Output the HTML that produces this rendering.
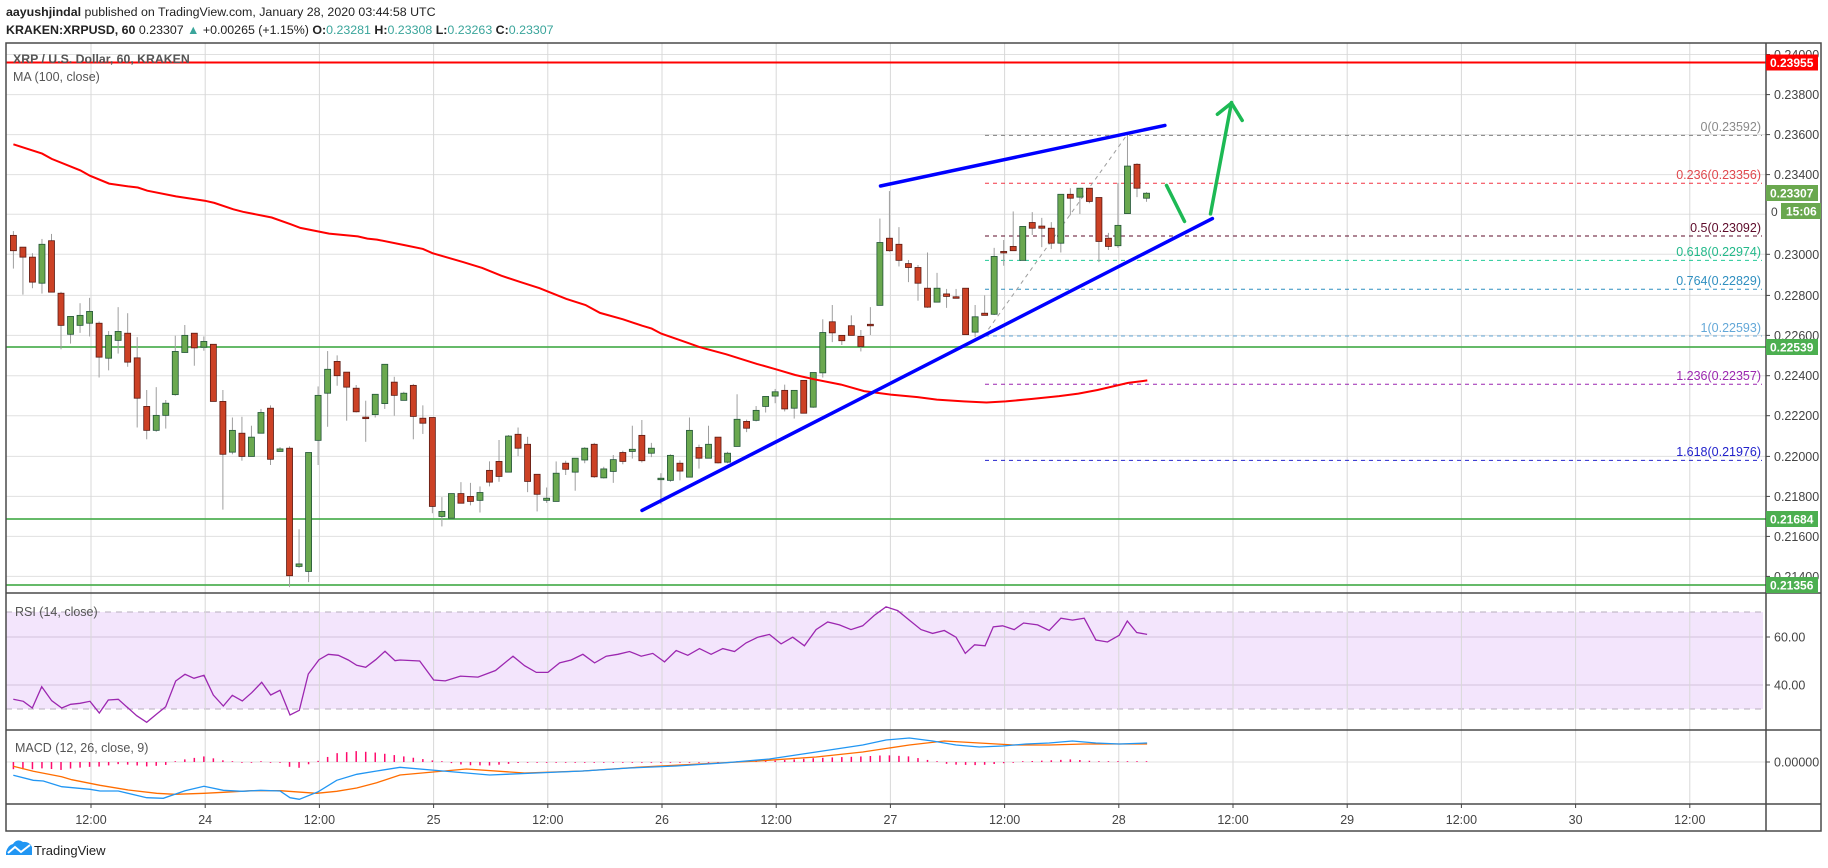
<!DOCTYPE html>
<html><head><meta charset="utf-8">
<style>
html,body{margin:0;padding:0;background:#fff;}
body{width:1828px;height:868px;overflow:hidden;position:relative;font-family:"Liberation Sans",sans-serif;}
svg{position:absolute;left:0;top:0;}
text{font-family:"Liberation Sans",sans-serif;}
</style></head><body>
<svg id="s" width="1828" height="868" viewBox="0 0 1828 868" xmlns="http://www.w3.org/2000/svg">
<g id="grid"></g>
<rect x="6" y="612" width="1757" height="97" fill="#f3e5fc"/>
<line x1="6" y1="612" x2="1763" y2="612" stroke="#b7aebc" stroke-dasharray="6,5"/>
<line x1="6" y1="709" x2="1763" y2="709" stroke="#b7aebc" stroke-dasharray="6,5"/>
<line x1="6" y1="637" x2="1763" y2="637" stroke="#d3c2dd"/>
<line x1="6" y1="685" x2="1763" y2="685" stroke="#d3c2dd"/>
<g id="vgrid"></g>
<line x1="6" y1="762" x2="1766" y2="762" stroke="#e0e0e0"/>
<line x1="6" y1="62.5" x2="1766" y2="62.5" stroke="#f00" stroke-width="2"/>
<line x1="6" y1="347" x2="1766" y2="347" stroke="#4caf50" stroke-width="2" opacity=".85"/>
<line x1="6" y1="519" x2="1766" y2="519" stroke="#4caf50" stroke-width="2" opacity=".85"/>
<line x1="6" y1="585" x2="1766" y2="585" stroke="#4caf50" stroke-width="2" opacity=".85"/>
<g stroke-dasharray="4,4" stroke-width="1">
<line x1="985" y1="135.4" x2="1762" y2="135.4" stroke="#808080"/>
<line x1="985" y1="183.2" x2="1762" y2="183.2" stroke="#f23645"/>
<line x1="985" y1="236" x2="1762" y2="236" stroke="#5d0b2a"/>
<line x1="985" y1="260.4" x2="1762" y2="260.4" stroke="#22c997"/>
<line x1="985" y1="289.3" x2="1762" y2="289.3" stroke="#2f8fc0"/>
<line x1="985" y1="336" x2="1762" y2="336" stroke="#64a8d8"/>
<line x1="985" y1="384.3" x2="1762" y2="384.3" stroke="#9c27b0"/>
<line x1="985" y1="460.4" x2="1762" y2="460.4" stroke="#2222cc"/>
<line x1="988.4" y1="329.3" x2="1127.4" y2="134.3" stroke="#9e9e9e"/>
</g>
<g font-size="12.5" text-anchor="end">
<text x="1761" y="131" fill="#8a8a8a">0(0.23592)</text>
<text x="1761" y="179" fill="#e0474c">0.236(0.23356)</text>
<text x="1761" y="232" fill="#5d0b2a">0.5(0.23092)</text>
<text x="1761" y="256" fill="#22b98a">0.618(0.22974)</text>
<text x="1761" y="285" fill="#2f8fc0">0.764(0.22829)</text>
<text x="1761" y="332" fill="#64a8d8">1(0.22593)</text>
<text x="1761" y="380" fill="#9c27b0">1.236(0.22357)</text>
<text x="1761" y="456" fill="#2222cc">1.618(0.21976)</text>
</g>
<g id="candles"></g>
<polyline id="ma" fill="none" stroke="#f00" stroke-width="2"/>
<line x1="642" y1="510.4" x2="1212.4" y2="218.6" stroke="#0000ff" stroke-width="3.5" stroke-linecap="round"/>
<line x1="880.5" y1="186" x2="1164.9" y2="125.4" stroke="#0000ff" stroke-width="3.5" stroke-linecap="round"/>
<line x1="1166.5" y1="185.4" x2="1184.5" y2="221.4" stroke="#1db954" stroke-width="3.5" stroke-linecap="round"/>
<polyline points="1210.5,213.9 1231.5,102.5" fill="none" stroke="#1db954" stroke-width="3.5" stroke-linecap="round"/>
<polyline points="1217.4,114.3 1231.5,103 1242.2,120.4" fill="none" stroke="#1db954" stroke-width="3.5" stroke-linecap="round" stroke-linejoin="round"/>
<polyline id="rsi" fill="none" stroke="#9c27b0" stroke-width="1.3"/>
<g id="hist" stroke="#ff0a6c" stroke-width="1.5"></g>
<polyline id="sig" fill="none" stroke="#ff6d00" stroke-width="1.3"/>
<polyline id="macd" fill="none" stroke="#2196f3" stroke-width="1.3"/>
<g stroke="#4a4a4a" stroke-width="1.5" fill="none">
<rect x="6" y="43" width="1815" height="788"/>
<line x1="1766" y1="43" x2="1766" y2="831"/>
<line x1="6" y1="593" x2="1821" y2="593"/>
<line x1="6" y1="730" x2="1821" y2="730"/>
<line x1="6" y1="804" x2="1821" y2="804"/>
</g>
<g id="axis" font-size="12.5" fill="#444"></g>
<g id="time" font-size="12.5" fill="#444" text-anchor="middle"></g>
<g font-size="12" font-weight="bold" fill="#fff">
<rect x="1766" y="54.5" width="52" height="16" fill="#f00"/>
<text x="1770" y="67">0.23955</text>
<rect x="1766" y="185" width="52" height="16" fill="#6aa84f"/>
<text x="1770" y="197.5">0.23307</text>
<text x="1771" y="216" font-weight="normal" fill="#444">0</text>
<rect x="1781" y="203" width="40" height="16" fill="#6aa84f"/>
<text x="1786" y="215.5">15:06</text>
<rect x="1766" y="339" width="52" height="16" fill="#4caf50"/>
<text x="1770" y="351.5">0.22539</text>
<rect x="1766" y="511" width="52" height="16" fill="#4caf50"/>
<text x="1770" y="523.5">0.21684</text>
<rect x="1766" y="577" width="52" height="16" fill="#4caf50"/>
<text x="1770" y="589.5">0.21356</text>
</g>
<text x="13" y="63" font-size="12.3" font-weight="bold" fill="#555">XRP / U.S. Dollar, 60, KRAKEN</text>
<text x="13" y="81" font-size="12.5" fill="#555">MA (100, close)</text>
<text x="15" y="616" font-size="12.5" fill="#555">RSI (14, close)</text>
<text x="15" y="752" font-size="12.5" fill="#555">MACD (12, 26, close, 9)</text>
<text x="6" y="16" font-size="12.4" fill="#222"><tspan font-weight="bold">aayushjindal</tspan> published on TradingView.com, January 28, 2020 03:44:58 UTC</text>
<text x="6" y="34" font-size="12.4" fill="#222"><tspan font-weight="bold">KRAKEN:XRPUSD, 60</tspan> 0.23307 <tspan fill="#3aa59b">▲</tspan> +0.00265 (+1.15%) <tspan font-weight="bold">O:</tspan><tspan fill="#3aa59b">0.23281</tspan> <tspan font-weight="bold">H:</tspan><tspan fill="#3aa59b">0.23308</tspan> <tspan font-weight="bold">L:</tspan><tspan fill="#3aa59b">0.23263</tspan> <tspan font-weight="bold">C:</tspan><tspan fill="#3aa59b">0.23307</tspan></text>
<path d="M6,855 L6,852 Q8,845 13,844 Q17,838 23,842 Q29,841 32,847 L32,855 Z" fill="#2196f3"/>
<polyline points="8,853 15,847 21,852 30,845" fill="none" stroke="#fff" stroke-width="2"/>
<text x="34" y="855" font-size="13" fill="#222">TradingView</text>
</svg>
<script>
var NS="http://www.w3.org/2000/svg";
function el(p,t,a){var e=document.createElementNS(NS,t);for(var k in a)e.setAttribute(k,a[k]);document.getElementById(p).appendChild(e);return e;}
var hy=[54.5,94.6,134.6,174.6,214.3,254.3,295.4,335.4,375.7,415.7,456.4,496.4,536.4,576.4];
hy.forEach(function(y){el("grid","line",{x1:6,y1:y,x2:1766,y2:y,stroke:"#e0e0e0"});});
var tl=["12:00","24","12:00","25","12:00","26","12:00","27","12:00","28","12:00","29","12:00","30","12:00"];
for(var i=0;i<15;i++){var x=91+i*114.2;
 el("vgrid","line",{x1:x,y1:43,x2:x,y2:804,stroke:"#d8d8d8"});
 el("time","line",{x1:x,y1:804,x2:x,y2:808,stroke:"#444"});
 var t=el("time","text",{x:x,y:824});t.textContent=tl[i];}
var ax=[["0.24000",54.5],["0.23800",94.6],["0.23600",134.6],["0.23400",174.6],["0.23000",254.3],["0.22800",295.4],["0.22600",335.4],["0.22400",375.7],["0.22200",415.7],["0.22000",456.4],["0.21800",496.4],["0.21600",536.4],["0.21400",576.4],["60.00",637],["40.00",685],["0.00000",762]];
ax.forEach(function(a){el("axis","line",{x1:1766,y1:a[1],x2:1770,y2:a[1],stroke:"#444"});var t=el("axis","text",{x:1774,y:a[1]+4.5});t.textContent=a[0];});
var D="r547,590,535,640;r580,608,580,713;r608,678,597,695;g572,681,557,710;r562,706,543,706;r709,799,705,866;g774,824,774,850;g771,799,737,820;g760,793,722,830;r793,888,788,945;g827,891,815,925;g816,841,748,878;r821,902,765,915;r890,1003,832,1085;r1026,1093,980,1118;g1051,1093,972,1097;g1017,1051,1008,1088;g872,993,828,996;g827,875,798,876;r821,862,821,912;g844,860,830,870;r852,1012,852,1012;r1012,1160,980,1315;g1093,1154,1057,1160;r1101,1166,1055,1178;g1112,1166,1080,1166;g1043,1101,1033,1101;r1031,1174,1023,1190;g1145,1152,1140,1152;r1143,1500,1138,1532;g1467,1474,1370,1478;g1155,1488,1155,1518;g995,1121,970,1190;g922,989,871,1083;r900,940,883,968;r930,972,930,1066;r975,1041,966,1043;r1056,1059,1010,1125;g992,1049,992,1057;g908,1018,908,1033;r958,995,943,1052;g989,1009,985,1009;r967,1054,963,1118;r1059,1073,1023,1103;r1057,1306,1057,1325;g1320,1334,1280,1362;g1270,1339,1270,1339;r1270,1297,1238,1297;r1278,1292,1240,1303;g1267,1289,1250,1323;r1205,1238,1180,1250;r1180,1222,1120,1237;g1109,1210,1106,1210;r1104,1143,1085,1165;r1132,1236,1111,1266;r1216,1272,1216,1320;g1283,1289,1253,1296;g1213,1292,1180,1292;r1185,1202,1178,1218;g1171,1210,1171,1262;g1143,1176,1140,1185;r1132,1223,1128,1226;"+
"g1201,1226,1195,1228;g1175,1208,1162,1240;r1155,1180,1150,1188;g1146,1152,1080,1172;r1107,1178,1064,1183;g1143,1157,1128,1168;g1227,1230,1213,1300;g1163,1233,1160,1237;r1185,1207,1177,1233;g1093,1224,1057,1224;r1141,1171,1133,1200;g1132,1171,1080,1171;r1112,1184,1112,1186;g1157,1182,1153,1185;g1062,1138,992,1138;r1068,1087,1063,1098;g1037,1065,1025,1068;g998,1026,998,1043;g985,997,977,1017;r981,1033,965,1040;g981,1031,981,1060;r953,1045,953,1045;g931,1028,931,1030;g819,932,782,945;r789,820,742,846;r827,842,826,854;r800,827,771,827;r830,858,812,872;r796,797,748,826;g567,743,500,743;r555,590,423,593;r572,617,524,634;r626,637,616,678;r637,681,630,730;r695,748,595,750;g695,734,652,734;r711,718,697,750;r719,721,697,721;r695,825,695,825;g775,818,742,832;r765,771,715,771;g606,768,582,770;r592,593,560,632;r578,590,480,590;g522,617,522,617;r511,527,482,546;r521,527,498,580;r527,569,510,585;g432,569,432,595;r432,443,415,491;g415,440,415,487;r415,452,415,457;r441,564,441,622;r555,578,540,588;g519,576,400,582;g353,486,264,486;r348,415,345,440;g429,443,426,453";
function Y(p){return 40+p/2.8;}
D.split(";").forEach(function(s,i){var c=s[0],v=s.slice(1).split(",").map(Number);var x=13.4+i*9.522;
 el("candles","line",{x1:x,y1:Y(v[2]),x2:x,y2:Y(v[3]),stroke:"#9e9e9e","stroke-width":1});
 var h=Math.max(Y(v[1])-Y(v[0]),1.5);
 el("candles","rect",{x:x-3,y:Y(v[0]),width:6,height:h,fill:c=="g"?"#6aa84f":"#cc4125",stroke:c=="g"?"#225437":"#5b1a13","stroke-width":0.8});});
var m7=[[35,292],[110,318],[135,333],[210,365],[235,380],[285,402],[335,410],[360,413],[385,422],[460,438],[535,450],[560,456],[610,474],[635,481],[710,497],[760,516],[785,526],[860,542],[935,550],[960,556],[985,559],[1060,575],[1105,585],[1130,597],[1210,622],[1260,638],[1310,660],[1360,678],[1410,695],[1435,706],[1480,725],[1530,742]];
var m8=[[0,764],[60,782],[110,800],[135,808],[160,822],[230,848],[260,860],[330,880],[410,907],[460,922],[510,938],[560,950],[630,965],[690,983],[760,993],[830,1000],[880,1007],[950,1012],[1010,1015],[1060,1012],[1130,1005],[1200,997],[1250,990],[1300,980],[1380,960],[1430,953]];
var mp=m7.map(function(a){return (a[0]/2.613).toFixed(1)+","+Y(a[1]).toFixed(1);}).concat(m8.map(function(a){return (600+a[0]/2.613).toFixed(1)+","+Y(a[1]).toFixed(1);}));
document.getElementById("ma").setAttribute("points",mp.join(" "));
var r1=[[40,418],[70,424],[97,444],[125,380],[155,422],[185,444],[212,433],[240,430],[270,424],[298,459],[325,420],[355,418],[410,467],[440,487],[470,462],[497,440],[527,363],[555,343],[582,355],[612,346],[640,405],[670,438],[697,406],[727,423],[755,398],[785,367],[812,405],[840,391],[870,465],[898,451],[925,342],[957,299],[985,283],[1015,286],[1045,300],[1070,316],[1097,322],[1127,299],[1155,274],[1185,302],[1200,300]];
var rp=r1.map(function(a){return (a[0]/3).toFixed(1)+","+(560+a[1]/3).toFixed(1);});
var r2=[[360,573],[372,593],[382,594],[395,589],[410,590],[425,583],[440,568],[450,578],[460,585],[470,585],[480,575],[490,572],[500,566],[510,575],[520,568],[530,566],[540,563],[550,568],[560,565],[570,574],[580,562],[590,567],[600,560],[610,566],[620,560],[630,563],[640,554],[650,548],[660,545],[670,555],[680,548],[690,557],[700,540],[710,532],[720,535],[730,540],[740,536],[750,525],[760,516],[770,520],[780,530],[790,540],[800,544],[810,541],[820,548],[828,565],[836,556],[845,557],[852,537],[860,536],[870,540],[878,533],[890,535],[900,541],[910,528],[920,530],[930,528],[940,551],[950,553],[960,546],[967,531],[975,543],[984,545]];
r2.forEach(function(a){rp.push((a[0]*1.1658).toFixed(1)+","+(660+(a[1]-572)*0.95).toFixed(1));});
document.getElementById("rsi").setAttribute("points",rp.join(" "));
var b1=[[40,646],[100,661],[130,663],[185,680],[270,688],[300,693],[355,693],[440,713],[490,715],[555,692],[612,679],[670,691],[727,694],[782,691],[840,693],[870,713],[898,718],[955,695],[1010,661],[1070,643],[1130,633],[1200,622]];
var s1=[[40,619],[100,634],[185,650],[215,659],[300,676],[385,690],[470,700],[525,703],[612,700],[670,697],[755,692],[840,692],[950,700],[1010,694],[1070,684],[1130,668],[1200,645]];
var b2=[[380,664],[420,668],[460,666],[500,664],[540,661],[580,659],[620,656],[660,652],[700,645],[740,638],[760,633],[780,631],[800,634],[820,638],[840,640],[860,639],[880,637],[900,636],[920,634],[940,636],[960,637],[984,636]];
var s2=[[400,662],[450,666],[500,664],[550,660],[600,657],[650,654],[700,650],[740,645],[780,638],[810,634],[840,636],[870,638],[900,638],[930,637],[960,637],[984,637]];
function pts(a,b){return a.map(function(p){return [p[0]/3,560+p[1]/3];}).concat(b.map(function(p){return [p[0]*1.1658,762+(p[1]-655)];}));}
var BP=pts(b1,b2),SP=pts(s1,s2);
function str(a){return a.map(function(p){return p[0].toFixed(1)+","+p[1].toFixed(1);}).join(" ");}
document.getElementById("macd").setAttribute("points",str(BP));
document.getElementById("sig").setAttribute("points",str(SP));
function interp(a,x){for(var i=1;i<a.length;i++){if(a[i][0]>=x){var t=(x-a[i-1][0])/(a[i][0]-a[i-1][0]);return a[i-1][1]+t*(a[i][1]-a[i-1][1]);}}return a[a.length-1][1];}
for(var i=0;i<120;i++){var x=13.4+i*9.522;var d=(interp(SP,x)-interp(BP,x))*0.8;if(Math.abs(d)<0.8)d=d<0?-0.8:0.8;
 el("hist","line",{x1:x,y1:762,x2:x,y2:762-d});}
</script>
</body></html>
